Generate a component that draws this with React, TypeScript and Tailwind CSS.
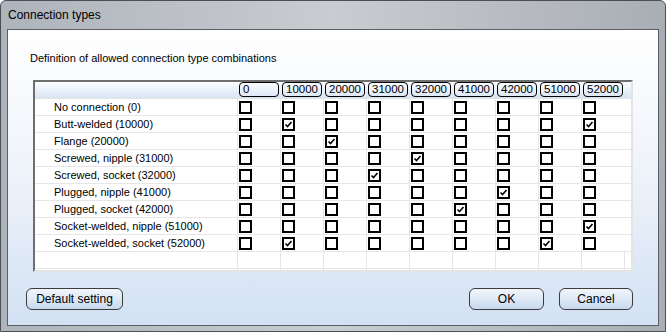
const COLUMNS = ['0', '10000', '20000', '31000', '32000', '41000', '42000', '51000', '52000'];

// Allowed combinations: row label -> checked column indexes
const ROWS: { label: string; checked: number[] }[] = [
  { label: 'No connection (0)', checked: [] },
  { label: 'Butt-welded (10000)', checked: [1, 8] },
  { label: 'Flange (20000)', checked: [2] },
  { label: 'Screwed, nipple (31000)', checked: [4] },
  { label: 'Screwed, socket (32000)', checked: [3] },
  { label: 'Plugged, nipple (41000)', checked: [6] },
  { label: 'Plugged, socket (42000)', checked: [5] },
  { label: 'Socket-welded, nipple (51000)', checked: [8] },
  { label: 'Socket-welded, socket (52000)', checked: [1, 7] },
];

function CheckBox({ checked }: { checked: boolean }) {
  return (
    <div className="w-[13px] h-[13px] border-2 border-black bg-white flex items-center justify-center">
      {checked && (
        <svg width="9" height="9" viewBox="0 0 9 9">
          <path d="M1.5 4.5 L3.5 6.5 L7.5 2" fill="none" stroke="#000" strokeWidth="1.6" />
        </svg>
      )}
    </div>
  );
}

function Button({ children, className }: { children: React.ReactNode; className: string }) {
  return (
    <button
      className={`h-[22px] rounded-[6px] border border-[#3c3c3c] bg-gradient-to-b from-[#f2f6fb] via-[#dfe9f5] to-[#c7d9ef] text-[12px] text-black ${className}`}
    >
      {children}
    </button>
  );
}

export default function App() {
  return (
    <div
      className="w-[666px] h-[332px] overflow-hidden rounded-t-[6px] border border-[#4a4e55] bg-gradient-to-r from-[#aeb4bc] via-[#c9ccd0] to-[#a9aeb5] flex flex-col px-[6px] pb-[5px]"
      style={{ fontFamily: '"Liberation Sans", Arial, sans-serif' }}
    >
      {/* Title bar */}
      <div className="h-[28px] flex items-center pl-[1px] text-[12px] text-black shrink-0">
        Connection types
      </div>

      {/* Client area */}
      <div className="flex-1 border border-[#5a5e66] bg-gradient-to-b from-white via-[#eef3fa] to-[#d2e1f3] flex flex-col">
        <div className="pl-[22px] pt-[20px] h-[50px] text-[11px] text-black">
          Definition of allowed connection type combinations
        </div>

        {/* Grid */}
        <div className="ml-[25px] w-[600px] h-[192px] border-2 border-t-[#6e6e6e] border-l-[#6e6e6e] border-r-[#e4e4e4] border-b-[#e4e4e4] bg-white overflow-hidden">
          <div className="flex h-[17px] bg-gradient-to-b from-[#fbfdff] to-[#d9e5f3] border-b border-[#e3e3e3]">
            <div className="w-[202px] shrink-0" />
            {COLUMNS.map((c) => (
              <div key={c} className="w-[43px] shrink-0 pl-[2px]">
                <div className="w-[40px] h-[15px] rounded-[4px] border border-black text-[11.5px] leading-[13px] pl-[3px] text-black">
                  {c}
                </div>
              </div>
            ))}
          </div>

          {ROWS.map((row) => (
            <div key={row.label} className="flex h-[17px] border-b border-[#e6e6e6]">
              <div className="w-[202px] shrink-0 pl-[19px] text-[11px] leading-[17px] text-black">
                {row.label}
              </div>
              {COLUMNS.map((c, i) => (
                <div key={c} className="w-[43px] shrink-0 border-l border-[#e6e6e6] pl-[1px] pt-[2px]">
                  <CheckBox checked={row.checked.includes(i)} />
                </div>
              ))}
            </div>
          ))}

          <div className="flex h-[17px] border-b border-[#e6e6e6]">
            <div className="w-[202px] shrink-0" />
            {COLUMNS.map((c) => (
              <div key={c} className="w-[43px] shrink-0 border-l border-[#e6e6e6]" />
            ))}
            <div className="border-l border-[#e6e6e6]" />
          </div>
          <div className="flex h-[20px]">
            <div className="w-[202px] shrink-0" />
            {COLUMNS.map((c) => (
              <div key={c} className="w-[43px] shrink-0 border-l border-[#e6e6e6]" />
            ))}
            <div className="border-l border-[#e6e6e6]" />
          </div>
        </div>

        <div className="flex items-center mt-[16px] pl-[18px] pr-[25px]">
          <Button className="w-[97px]">Default setting</Button>
          <div className="flex-1" />
          <Button className="w-[75px]">OK</Button>
          <Button className="w-[74px] ml-[15px]">Cancel</Button>
        </div>
      </div>
    </div>
  );
}
